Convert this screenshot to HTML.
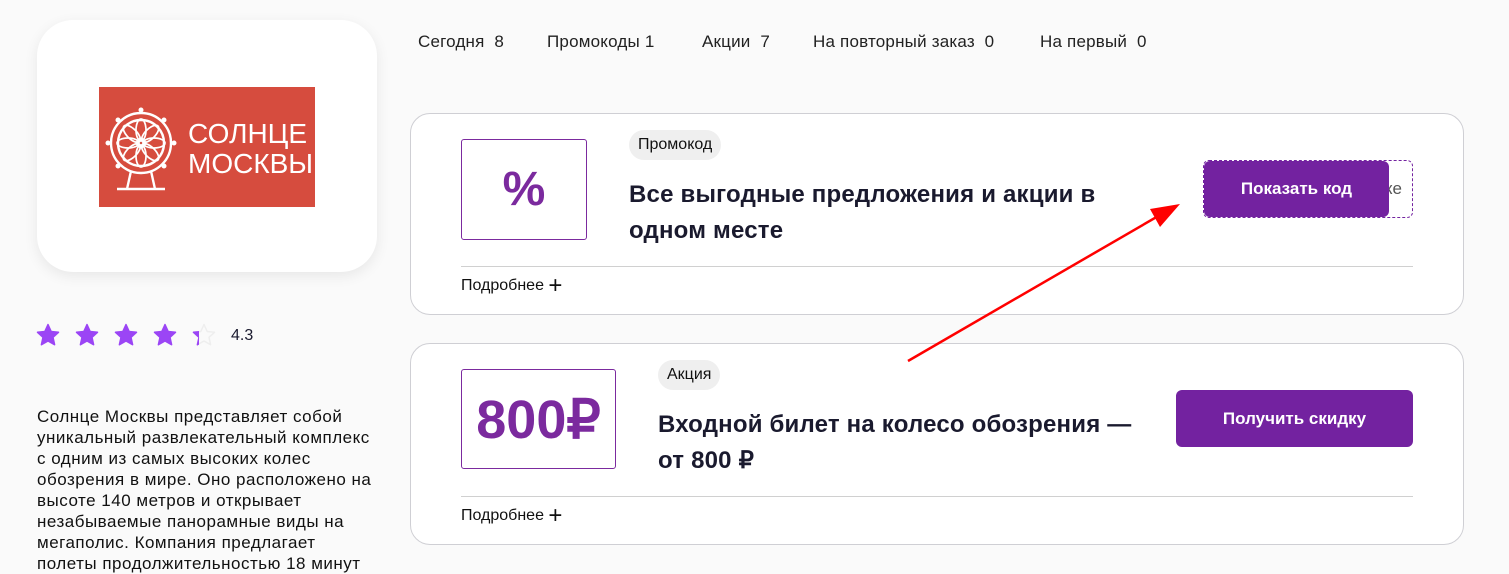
<!DOCTYPE html>
<html><head><meta charset="utf-8"><style>
body{margin:0;width:1509px;height:565px;background:#fafafa;font-family:"Liberation Sans",sans-serif;color:#1a1a2e;position:relative;overflow:hidden}
.abs{position:absolute}
.logo{left:37px;top:20px;width:340px;height:252px;background:#fff;border-radius:36px;box-shadow:0 4px 14px rgba(0,0,0,.08)}
.red{left:99px;top:87px;width:216px;height:120px;background:#d64c3e}
.tabs{top:32px;font-size:17px;color:#222;letter-spacing:0.2px}
.card{left:410px;width:1054px;height:202px;background:#fff;border:1px solid #cfcfd4;border-radius:20px;box-sizing:border-box}
.box{border:1px solid #7b2a9e;border-radius:3px;color:#7b2a9e;display:flex;align-items:center;justify-content:center;font-weight:bold}
.tag{background:#efefef;border-radius:16px;font-size:16px;padding:6px 9px;color:#111}
.title{font-size:24px;font-weight:bold;line-height:36px;color:#1a1a2e;letter-spacing:0.2px}
.line{height:1px;background:#d0d0d0}
.more{font-size:16px;color:#111}
.btn{background:#7322a0;color:#fff;border-radius:6px;font-size:17px;font-weight:bold;display:flex;align-items:center;justify-content:center}
.desc{left:37px;top:406px;width:338px;font-size:17px;line-height:21px;color:#111;letter-spacing:0.5px}
</style></head><body>
<div class="abs logo"></div>
<div class="abs red">
<svg width="80" height="100" style="position:absolute;left:4px;top:8px" viewBox="0 0 80 100" fill="none" stroke="#fff" stroke-width="2.4">
<circle cx="38" cy="48" r="30"/><circle cx="38" cy="48" r="23"/><circle cx="38" cy="48" r="4"/>
<g fill="#fff" stroke="none"><circle cx="38" cy="15" r="2.5"/><circle cx="61" cy="25" r="2.5"/><circle cx="71" cy="48" r="2.5"/><circle cx="61" cy="71" r="2.5"/><circle cx="15" cy="71" r="2.5"/><circle cx="5" cy="48" r="2.5"/><circle cx="15" cy="25" r="2.5"/></g>
<g stroke-width="1.7"><ellipse cx="38" cy="35" rx="5" ry="11"/><ellipse cx="38" cy="61" rx="5" ry="11"/><ellipse cx="25" cy="48" rx="11" ry="5"/><ellipse cx="51" cy="48" rx="11" ry="5"/><ellipse cx="38" cy="35" rx="5" ry="11" transform="rotate(45 38 48)"/><ellipse cx="38" cy="35" rx="5" ry="11" transform="rotate(-45 38 48)"/><ellipse cx="38" cy="35" rx="5" ry="11" transform="rotate(135 38 48)"/><ellipse cx="38" cy="35" rx="5" ry="11" transform="rotate(-135 38 48)"/></g>
<path d="M28 76L24 94H52L48 76M14 94H62"/>
</svg>
<div style="position:absolute;left:89px;top:32px;color:#fff;font-size:28px;line-height:30px">СОЛНЦЕ<br>МОСКВЫ</div>
</div>
<div class="abs tabs" style="left:418px">Сегодня&nbsp; 8</div>
<div class="abs tabs" style="left:547px">Промокоды&nbsp;1</div>
<div class="abs tabs" style="left:702px">Акции&nbsp; 7</div>
<div class="abs tabs" style="left:813px">На повторный заказ&nbsp; 0</div>
<div class="abs tabs" style="left:1040px">На первый&nbsp; 0</div>

<svg class="abs" style="left:36px;top:323px" width="182" height="28" viewBox="0 0 182 28">
<defs><path id="s" d="M12 1.5l3.2 7 7.3.8-5.5 5 1.6 7.4L12 18l-6.6 3.7 1.6-7.4-5.5-5 7.3-.8z" stroke-linejoin="round" stroke-width="1.5"/>
<clipPath id="c"><rect x="0" y="0" width="7" height="28"/></clipPath></defs>
<g fill="#9b45f5" stroke="#9b45f5"><use href="#s" x="0"/><use href="#s" x="39"/><use href="#s" x="78"/><use href="#s" x="117"/></g>
<g transform="translate(156,0)"><use href="#s" fill="none" stroke="#eee"/><use href="#s" fill="#9b45f5" stroke="#9b45f5" clip-path="url(#c)"/></g>
</svg>
<div class="abs" style="left:231px;top:327px;font-size:16px">4.3</div>
<div class="abs desc">Солнце Москвы представляет собой уникальный развлекательный комплекс с одним из самых высоких колес обозрения в мире. Оно расположено на высоте 140 метров и открывает незабываемые панорамные виды на мегаполис. Компания предлагает полеты продолжительностью 18 минут</div>

<div class="abs card" style="top:113px"></div>
<div class="abs box" style="left:461px;top:139px;width:124px;height:99px;font-size:48px">%</div>
<div class="abs tag" style="left:629px;top:130px">Промокод</div>
<div class="abs title" style="left:629px;top:177px;width:520px">Все выгодные предложения и акции в одном месте</div>
<div class="abs" style="left:1203px;top:160px;width:210px;height:58px;border:1px dashed #7322a0;border-radius:6px;font-size:17px;color:#555;display:flex;align-items:center;justify-content:flex-end;padding-right:10px;box-sizing:border-box">ке</div>
<div class="abs btn" style="left:1204px;top:161px;width:185px;height:56px">Показать код</div>
<div class="abs line" style="left:461px;top:266px;width:952px"></div>
<div class="abs more" style="left:461px;top:277px">Подробнее <span style="font-size:24px;line-height:16px;vertical-align:-3px">+</span></div>

<div class="abs card" style="top:343px"></div>
<div class="abs box" style="left:461px;top:369px;width:153px;height:98px;font-size:54px">800₽</div>
<div class="abs tag" style="left:658px;top:360px">Акция</div>
<div class="abs title" style="left:658px;top:407px;width:520px">Входной билет на колесо обозрения —<br>от 800 ₽</div>
<div class="abs btn" style="left:1176px;top:390px;width:237px;height:57px">Получить скидку</div>
<div class="abs line" style="left:461px;top:496px;width:952px"></div>
<div class="abs more" style="left:461px;top:507px">Подробнее <span style="font-size:24px;line-height:16px;vertical-align:-3px">+</span></div>

<svg class="abs" style="left:0;top:0" width="1509" height="565"><line x1="908" y1="361" x2="1160" y2="215" stroke="#f00" stroke-width="2.5"/><polygon points="1180,204 1150,209 1160,227" fill="#f00"/></svg>
</body></html>
